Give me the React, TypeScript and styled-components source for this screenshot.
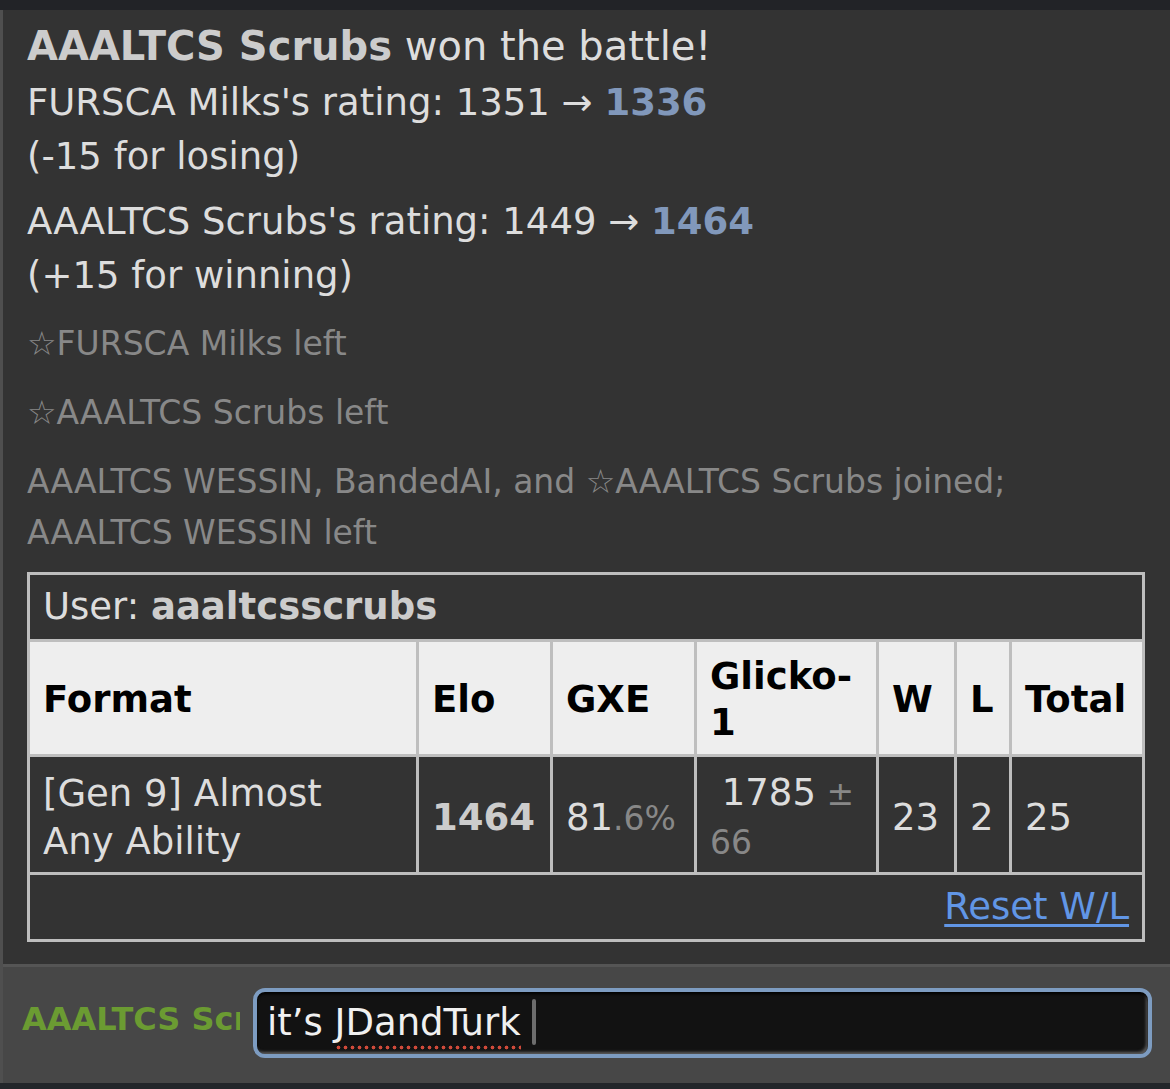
import React from "react"
import styled, { createGlobalStyle } from "styled-components"

const GlobalStyle = createGlobalStyle`
  html, body {
    margin: 0;
    padding: 0;
    background: #333;
  }
  body {
    font-family: "DejaVu Sans", Verdana, sans-serif;
    color: #ddd;
  }
`

const Page = styled.div`
  width: 1170px;
  height: 1089px;
  display: flex;
  flex-direction: column;
  overflow: hidden;
`

const TopBar = styled.div`
  height: 10px;
  background: #222327;
  flex: none;
`

const BottomBar = styled.div`
  height: 7px;
  background: #23262a;
  flex: none;
`

const Frame = styled.div`
  flex: 1;
  display: flex;
  flex-direction: column;
  border-left: 3px solid #4f4f4f;
  background: #333;
`

const Log = styled.div`
  flex: 1;
  padding: 9px 25px 22px 24px;
`

const Winner = styled.div`
  font-size: 40px;
  line-height: 54px;
  color: #ddd;
  white-space: nowrap;

  b {
    color: #ccc;
  }
`

const Rating = styled.div<{ $gap: number }>`
  margin-top: ${p => p.$gap}px;
  font-size: 37px;
  line-height: 54px;
  color: #ddd;

  strong {
    color: #8198bb;
  }
`

const Notice = styled.div<{ $gap?: number }>`
  margin-top: ${p => p.$gap ?? 0}px;
  padding: 9px 0;
  font-size: 33px;
  line-height: 51px;
  color: #888;
`

const LadderTable = styled.table`
  margin-top: 5px;
  width: 1118px;
  table-layout: fixed;
  border-collapse: separate;
  border-spacing: 0;
  border-right: 3px solid #bebebe;
  border-bottom: 3px solid #bebebe;
  font-size: 37px;
  color: #ddd;
`

const Cell = styled.td<{ $h: number }>`
  border-left: 3px solid #bebebe;
  border-top: 3px solid #bebebe;
  padding: 0 13px;
  height: ${p => p.$h}px;
  vertical-align: middle;
  line-height: 48px;
  white-space: normal;
`

const UserCell = styled(Cell)`
  line-height: 52px;

  b {
    color: #ccc;
  }
`

const HeadCell = styled.th`
  border-left: 3px solid #bebebe;
  border-top: 3px solid #bebebe;
  background: #eee;
  color: #000;
  font-weight: bold;
  text-align: left;
  padding: 12px 13px 8px;
  height: 92px;
  line-height: 46px;
  vertical-align: middle;
`

const DataCell = styled(Cell)`
  padding-top: 12px;
  padding-bottom: 5px;

  b {
    color: #ccc;
  }
`

const Dim = styled.small`
  font-size: 33px;
  color: #888;
`

const FooterCell = styled(Cell)`
  text-align: right;
`

const ResetLink = styled.a`
  color: #6196e6;
  text-decoration: underline;
  text-underline-offset: 5px;
  text-decoration-thickness: 3px;
  cursor: pointer;
`

const ChatBar = styled.div`
  flex: none;
  display: flex;
  align-items: center;
  gap: 13px;
  padding: 21px 18px 25px 19px;
  background: #474747;
  border-top: 3px solid #555;
`

const ChatName = styled.div`
  width: 218px;
  flex: none;
  overflow: hidden;
  white-space: nowrap;
  font-size: 32px;
  font-weight: bold;
  color: #6b9b32;
  margin-top: -9px;
`

const ChatInput = styled.div`
  flex: 1;
  height: 62px;
  box-sizing: content-box;
  display: flex;
  align-items: center;
  padding: 0 10px;
  border: 4px solid #7d9cc1;
  border-radius: 12px;
  background: #121212;
  box-shadow: inset 0 2px 3px #000, inset -2px -2px 3px rgba(160, 160, 160, 0.55);
`

const InputText = styled.span`
  font-size: 37px;
  line-height: 50px;
  color: #f0f0f0;
  white-space: pre;
`

const Misspelt = styled.span`
  padding-bottom: 6px;
  background-image: radial-gradient(circle, #d04a3a 1.6px, transparent 2.2px);
  background-size: 7px 5px;
  background-repeat: repeat-x;
  background-position: 0 100%;
`

const Caret = styled.span`
  display: inline-block;
  width: 4px;
  height: 46px;
  vertical-align: middle;
  margin-top: -6px;
  background: #6d6d6d;
  border-radius: 2px;
`

const columns = [389, 134, 144, 182, 78, 55, 133]

export default function App() {
  return (
    <>
      <GlobalStyle />
      <Page>
        <TopBar />
        <Frame>
          <Log>
            <Winner>
              <b>AAALTCS Scrubs</b> won the battle!
            </Winner>
            <Rating $gap={3}>
              FURSCA Milks's rating: 1351 → <strong>1336</strong>
              <br />
              (-15 for losing)
            </Rating>
            <Rating $gap={11}>
              AAALTCS Scrubs's rating: 1449 → <strong>1464</strong>
              <br />
              (+15 for winning)
            </Rating>
            <Notice $gap={6}>☆FURSCA Milks left</Notice>
            <Notice>☆AAALTCS Scrubs left</Notice>
            <Notice>
              AAALTCS WESSIN, BandedAI, and ☆AAALTCS Scrubs joined;
              <br />
              AAALTCS WESSIN left
            </Notice>
            <LadderTable>
              <colgroup>
                {columns.map((w, i) => (
                  <col key={i} style={{ width: w }} />
                ))}
              </colgroup>
              <tbody>
                <tr>
                  <UserCell colSpan={7} $h={64}>
                    User: <b>aaaltcsscrubs</b>
                  </UserCell>
                </tr>
                <tr>
                  <HeadCell>Format</HeadCell>
                  <HeadCell>Elo</HeadCell>
                  <HeadCell>GXE</HeadCell>
                  <HeadCell>Glicko-1</HeadCell>
                  <HeadCell>W</HeadCell>
                  <HeadCell>L</HeadCell>
                  <HeadCell>Total</HeadCell>
                </tr>
                <tr>
                  <DataCell $h={96}>
                    [Gen 9] Almost
                    <br />
                    Any Ability
                  </DataCell>
                  <DataCell $h={96}>
                    <b>1464</b>
                  </DataCell>
                  <DataCell $h={96}>
                    81<Dim>.6%</Dim>
                  </DataCell>
                  <DataCell $h={96}>
                    {"\u00a01785"}
                    <Dim> ± 66</Dim>
                  </DataCell>
                  <DataCell $h={96}>23</DataCell>
                  <DataCell $h={96}>2</DataCell>
                  <DataCell $h={96}>25</DataCell>
                </tr>
                <tr>
                  <FooterCell colSpan={7} $h={64}>
                    <ResetLink>Reset W/L</ResetLink>
                  </FooterCell>
                </tr>
              </tbody>
            </LadderTable>
          </Log>
          <ChatBar>
            <ChatName>AAALTCS Scrubs</ChatName>
            <ChatInput>
              <InputText>
                it’s <Misspelt>JDandTurk</Misspelt> <Caret />
              </InputText>
            </ChatInput>
          </ChatBar>
        </Frame>
        <BottomBar />
      </Page>
    </>
  )
}
